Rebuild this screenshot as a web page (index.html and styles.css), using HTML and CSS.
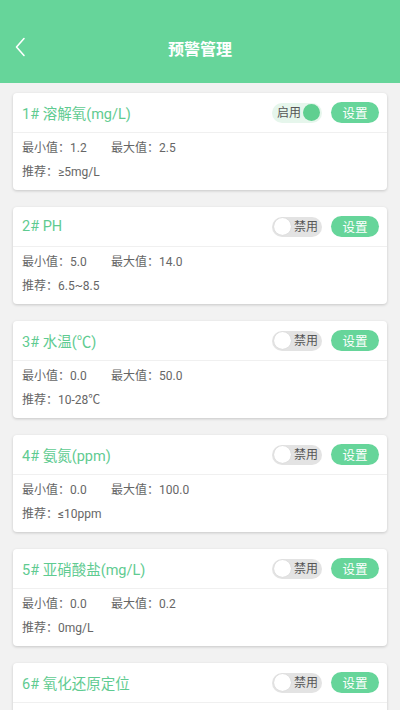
FILE: index.html
```html
<!DOCTYPE html>
<html lang="zh">
<head>
<meta charset="utf-8">
<link rel="stylesheet" href="styles.css">
</head>
<body>
<div class="header">
  <svg class="back" width="12" height="20" viewBox="0 0 12 20"><path d="M10 1.5 L2.5 10 L10 18.5" fill="none" stroke="#fff" stroke-width="1.6" stroke-linecap="round" stroke-linejoin="round"/></svg>
  <div class="title">预警管理</div>
</div>
<div class="list">
  <div class="card">
    <div class="card-head">
      <div class="name">1# 溶解氧(mg/L)</div>
      <div class="toggle on"><span class="tlabel">启用</span><span class="knob"></span></div>
      <div class="btn">设置</div>
    </div>
    <div class="card-body">
      <div class="row"><span class="min">最小值：1.2</span><span>最大值：2.5</span></div>
      <div class="row">推荐：≥5mg/L</div>
    </div>
  </div>
  <div class="card">
    <div class="card-head">
      <div class="name">2# PH</div>
      <div class="toggle off"><span class="knob"></span><span class="tlabel">禁用</span></div>
      <div class="btn">设置</div>
    </div>
    <div class="card-body">
      <div class="row"><span class="min">最小值：5.0</span><span>最大值：14.0</span></div>
      <div class="row">推荐：6.5~8.5</div>
    </div>
  </div>
  <div class="card">
    <div class="card-head">
      <div class="name">3# 水温(℃)</div>
      <div class="toggle off"><span class="knob"></span><span class="tlabel">禁用</span></div>
      <div class="btn">设置</div>
    </div>
    <div class="card-body">
      <div class="row"><span class="min">最小值：0.0</span><span>最大值：50.0</span></div>
      <div class="row">推荐：10-28℃</div>
    </div>
  </div>
  <div class="card">
    <div class="card-head">
      <div class="name">4# 氨氮(ppm)</div>
      <div class="toggle off"><span class="knob"></span><span class="tlabel">禁用</span></div>
      <div class="btn">设置</div>
    </div>
    <div class="card-body">
      <div class="row"><span class="min">最小值：0.0</span><span>最大值：100.0</span></div>
      <div class="row">推荐：≤10ppm</div>
    </div>
  </div>
  <div class="card">
    <div class="card-head">
      <div class="name">5# 亚硝酸盐(mg/L)</div>
      <div class="toggle off"><span class="knob"></span><span class="tlabel">禁用</span></div>
      <div class="btn">设置</div>
    </div>
    <div class="card-body">
      <div class="row"><span class="min">最小值：0.0</span><span>最大值：0.2</span></div>
      <div class="row">推荐：0mg/L</div>
    </div>
  </div>
  <div class="card">
    <div class="card-head">
      <div class="name">6# 氧化还原定位</div>
      <div class="toggle off"><span class="knob"></span><span class="tlabel">禁用</span></div>
      <div class="btn">设置</div>
    </div>
    <div class="card-body empty"></div>
  </div>
</div>
</body>
</html>
```
FILE: styles.css
```css
* { box-sizing: border-box; }
html, body { margin: 0; padding: 0; }
body {
  width: 400px;
  height: 710px;
  overflow: hidden;
  background: #f2f2f2;
  font-family: Roboto, "Noto Sans CJK SC", sans-serif;
}
.header {
  height: 83px;
  background: #66d59a;
  position: relative;
  display: flex;
  align-items: center;
  justify-content: center;
  padding-top: 12px;
}
.back {
  position: absolute;
  left: 14px;
  top: 37px;
}
.title {
  color: #fff;
  font-size: 16px;
  font-weight: bold;
}
.list {
  padding: 10px 13px 0;
  display: flex;
  flex-direction: column;
  gap: 17px;
}
.card {
  background: #fff;
  border-radius: 4px;
  box-shadow: 0 1px 3px rgba(0,0,0,0.18);
  flex-shrink: 0;
}
.card-head {
  height: 40px;
  display: flex;
  align-items: center;
  padding: 0 8px 0 9px;
  border-bottom: 1px solid #f0f0f0;
}
.name {
  flex: 1;
  color: #5fcb91;
  font-size: 14.5px;
}
.toggle {
  width: 50px;
  height: 20px;
  border-radius: 10px;
  display: flex;
  align-items: center;
  padding: 0 2px;
  gap: 2px;
  font-size: 12px;
  margin-right: 9px;
}
.toggle.on {
  background: #e6f6ec;
  color: #555;
  justify-content: flex-end;
}
.toggle.off {
  background: #e3e3e3;
  color: #555;
  justify-content: space-between;
  padding-right: 4px;
}
.knob {
  width: 17px;
  height: 17px;
  border-radius: 50%;
  flex-shrink: 0;
}
.toggle.on .knob { background: #5fcf90; }
.toggle.off .knob { background: #fff; box-shadow: 0 0 1px rgba(0,0,0,0.15); }
.tlabel { line-height: 20px; }
.btn {
  width: 48px;
  height: 21px;
  border-radius: 11px;
  background: #66d59a;
  color: #fff;
  font-size: 12.5px;
  display: flex;
  align-items: center;
  justify-content: center;
}
.card-body {
  padding: 3px 9px 6px;
  color: #666;
  font-size: 12px;
}
.card-body.empty { height: 57px; }
.row {
  height: 24px;
  line-height: 24px;
  display: flex;
}
.min { width: 89px; }
```
